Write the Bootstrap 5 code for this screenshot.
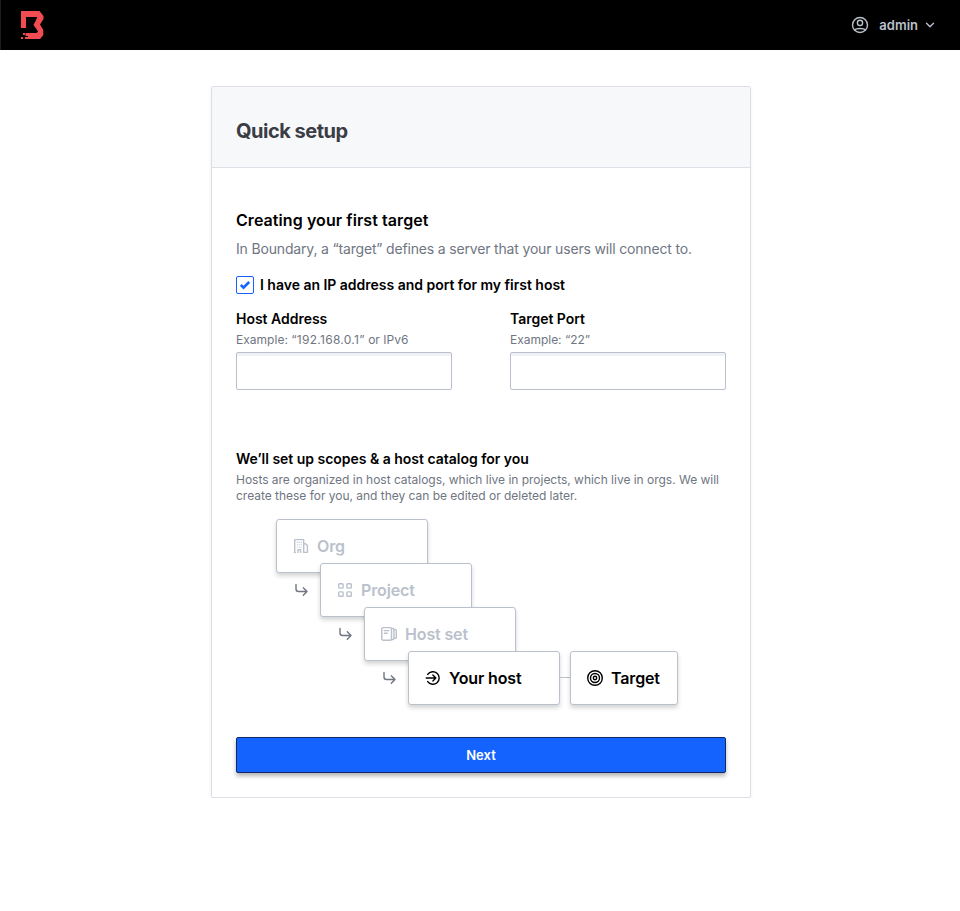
<!DOCTYPE html>
<html lang="en">
<head>
<meta charset="utf-8">
<meta name="viewport" content="width=device-width, initial-scale=1">
<title>Quick setup</title>
<link href="https://cdn.jsdelivr.net/npm/bootstrap@5.3.0/dist/css/bootstrap.min.css" rel="stylesheet">
<style>
  body { font-family: Inter, "Liberation Sans", sans-serif; color: #000; font-size: 14px; line-height: 20px; }
  .topbar { height: 50px; background: #000; padding: 0 25px 0 19px; color: #bac1cc; border-left: 1px solid #1c1c1f; }
  .user-name { font-size: 13px; font-weight: 600; margin-left: 10px; margin-right: 7px; }
  .page-area { padding-left: 2px; }
  .setup { width: 540px; margin-top: 36px; border: 1px solid #dcdfe6; border-radius: 2px; box-shadow: 0 3px 4px rgba(0,0,0,.06); }
  .setup-head { height: 81px; padding: 7px 24px 0; background: #f7f8fa; border-bottom: 1px solid #dcdfe6; border-radius: 1px 1px 0 0; }
  .setup-head h1 { font-size: 20px; line-height: 24px; font-weight: 700; color: #3b3d45; letter-spacing: -.5px; }
  .setup-body { padding: 40px 24px 24px; }
  .setup-body h2 { font-size: 16px; line-height: 24px; font-weight: 600; margin-bottom: 7px; letter-spacing: .07px; }
  .intro { color: #6f7682; margin-bottom: 16px; letter-spacing: -.17px; }
  .check-row { height: 20px; margin-bottom: 14px; }
  .check-row .form-check-input { width: 18px; height: 18px; border: 1px solid #1563ff; border-radius: 2px; background: #fff; margin: 0; box-shadow: none; }
  .check-row .strong-label { margin-left: 6px; }
  .field { width: 216px; }
  .strong-label { font-weight: 600; line-height: 20px; font-size: 14px; margin: 0; letter-spacing: -.02px; }
  .hint { font-size: 12px; line-height: 16px; color: #6f7682; margin: 3px 0 0; letter-spacing: -.02px; }
  .address-hint { letter-spacing: .02px; }
  .address-hint span { letter-spacing: .28px; }
  .field .form-control { height: 38px; margin-top: 4px; border: 1px solid #bac1cc; border-radius: 2px; box-shadow: inset 0 3px 1px #f0f1f4; }
  .scopes { margin-top: 59px; }
  .diagram { height: 186px; margin-top: 15px; }
  .node { position: absolute; width: 152px; height: 54px; padding-left: 16px; gap: 8px; background: #fff; border: 1px solid #bac1cc; border-radius: 3px; box-shadow: 0 3px 4px rgba(0,0,0,.17); font-size: 16px; font-weight: 600; letter-spacing: -.14px; }
  .faded { color: #bac1cc; }
  .n-org { left: 40px; top: 0; }
  .n-project { left: 84px; top: 44px; }
  .n-set { left: 128px; top: 88px; }
  .n-host { left: 172px; top: 132px; }
  .n-target { left: 334px; top: 132px; width: 108px; }
  .link-line { position: absolute; left: 324px; top: 158px; width: 10px; height: 1px; background: #bac1cc; }
  .hook { position: absolute; color: #6f7682; }
  .h-1 { left: 57px; top: 63px; }
  .h-2 { left: 101px; top: 107px; }
  .h-3 { left: 145px; top: 151px; }
  .btn-next { height: 36px; margin-top: 32px; padding: 0; background: #1563ff; color: #fff; border: 1px solid #0e2a66; border-radius: 2px; font-size: 13px; font-weight: 600; line-height: 20px; box-shadow: 0 3px 4px rgba(0,0,0,.3); }
  svg { display: block; flex: none; fill: none; stroke: currentColor; stroke-width: 1.4; stroke-linecap: round; stroke-linejoin: round; }
  .brand-mark { fill: #f24c53; stroke: none; }
  .tick { position: absolute; left: 4px; top: 4px; color: #1563ff; stroke-width: 2.6; stroke-linecap: butt; stroke-linejoin: miter; pointer-events: none; }
</style>
</head>
<body class="bg-white">
<header class="topbar d-flex align-items-center justify-content-between">
  <svg class="brand-mark" width="26" height="30" viewBox="0 0 26 30">
    <path d="M1 1H19.5L23.5 6V9L20 14.5L23.3 20V25L20 29H8V26H5.5V23H16.5L18.2 21.5L13.5 15L17 8V7H6V18H1Z"/>
    <path d="M3 23H5V25H3ZM1 27H3V29H1ZM5 27H8V29H5Z"/>
  </svg>
  <div class="d-flex align-items-center">
    <svg width="18" height="18" viewBox="0 0 18 18" stroke-width="1.6"><circle cx="9" cy="9" r="7.5"/><circle cx="9" cy="6.9" r="2.6"/><path d="M3.4 13.8C5.5 12 12.5 12 14.6 13.8"/></svg>
    <span class="user-name">admin</span>
    <svg width="10" height="8" viewBox="0 0 10 8"><path d="M1.5 2.2L5 5.7L8.5 2.2"/></svg>
  </div>
</header>

<div class="page-area">
<main class="setup mx-auto bg-white">
  <div class="setup-head d-flex align-items-center"><h1 class="m-0">Quick setup</h1></div>
  <form class="setup-body">
    <h2>Creating your first target</h2>
    <p class="intro">In Boundary, a “target” defines a server that your users will connect to.</p>
    <div class="check-row d-flex align-items-center">
      <div class="position-relative d-flex">
        <input class="form-check-input" type="checkbox" id="haveHost">
        <svg class="tick" width="10" height="10" viewBox="0 0 10 10"><path d="M.8 5L3.5 7.6L9.2 1.9"/></svg>
      </div>
      <label class="strong-label" for="haveHost">I have an IP address and port for my first host</label>
    </div>
    <div class="d-flex justify-content-between">
      <div class="field">
        <label class="strong-label d-block" for="host">Host Address</label>
        <p class="hint address-hint">Example: <span>“192.168.0.1”</span> or IPv6</p>
        <input class="form-control" id="host" type="text">
      </div>
      <div class="field">
        <label class="strong-label d-block" for="port">Target Port</label>
        <p class="hint">Example: “22”</p>
        <input class="form-control" id="port" type="text">
      </div>
    </div>
    <section class="scopes">
      <h3 class="strong-label">We’ll set up scopes &amp; a host catalog for you</h3>
      <p class="hint">Hosts are organized in host catalogs, which live in projects, which live in orgs. We will<br>create these for you, and they can be edited or deleted later.</p>
      <div class="diagram position-relative">
        <div class="node n-org faded d-flex align-items-center">
          <svg width="16" height="16" viewBox="0 0 16 16"><path d="M1.7 14.4V2.3Q1.7 1.6 2.4 1.6H10Q10.7 1.6 10.7 2.3V14.4H14.4V7.6L12.6 5.8H10.7M5 14.4V11.6H7.6V14.4M1.3 14.4H2.3"/><path stroke-width="1.1" d="M4.2 4.4h.1M6.2 4.4h.1M8.2 4.4h.1M4.2 6.7h.1M6.2 6.7h.1M8.2 6.7h.1M4.2 9h.1M6.2 9h.1M8.2 9h.1"/></svg>
          <span>Org</span>
        </div>
        <div class="node n-project faded d-flex align-items-center">
          <svg width="16" height="16" viewBox="0 0 16 16"><rect x="1.7" y="1.7" width="4.4" height="4.4" rx=".8"/><rect x="9.9" y="1.7" width="4.4" height="4.4" rx=".8"/><rect x="1.7" y="9.9" width="4.4" height="4.4" rx=".8"/><rect x="9.9" y="9.9" width="4.4" height="4.4" rx=".8"/></svg>
          <span>Project</span>
        </div>
        <div class="node n-set faded d-flex align-items-center">
          <svg width="16" height="16" viewBox="0 0 16 16"><rect x=".8" y="1.6" width="9.7" height="12.6" rx="1.2"/><path d="M3.4 4.6H7.8M3.4 7.2H6.3M10.5 2.4H12.2Q12.9 2.4 12.9 3.1V12.8Q12.9 13.5 12.2 13.5H10.5M13 3.6H14.4Q15.3 3.6 15.3 4.5V11.5Q15.3 12.4 14.4 12.4H13"/></svg>
          <span>Host set</span>
        </div>
        <div class="node n-host d-flex align-items-center">
          <svg width="16" height="16" viewBox="0 0 16 16"><path d="M2.7 4.4A6.3 6.3 0 1 1 2.7 11.6M1.2 8H10.6M7.9 5.1L10.8 8L7.9 10.9"/></svg>
          <span>Your host</span>
        </div>
        <div class="link-line"></div>
        <div class="node n-target d-flex align-items-center">
          <svg width="16" height="16" viewBox="0 0 16 16"><circle cx="8" cy="8" r="7.3"/><circle cx="8" cy="8" r="4.5"/><circle cx="8" cy="8" r="1.7"/></svg>
          <span>Target</span>
        </div>
        <svg class="hook h-1" width="16" height="16" viewBox="0 0 16 16"><path d="M3 2.5V7Q3 9.5 5.5 9.5H13.5M10.3 5.8L14 9.5L10.3 13.2"/></svg>
        <svg class="hook h-2" width="16" height="16" viewBox="0 0 16 16"><path d="M3 2.5V7Q3 9.5 5.5 9.5H13.5M10.3 5.8L14 9.5L10.3 13.2"/></svg>
        <svg class="hook h-3" width="16" height="16" viewBox="0 0 16 16"><path d="M3 2.5V7Q3 9.5 5.5 9.5H13.5M10.3 5.8L14 9.5L10.3 13.2"/></svg>
      </div>
    </section>
    <button class="btn btn-next w-100 d-block" type="button">Next</button>
  </form>
</main>
</div>
<script src="https://cdn.jsdelivr.net/npm/bootstrap@5.3.0/dist/js/bootstrap.bundle.min.js"></script>
</body>
</html>
